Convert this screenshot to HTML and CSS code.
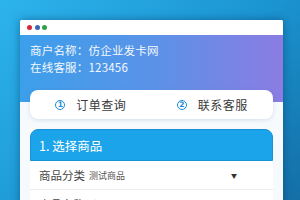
FILE: index.html
```html
<!DOCTYPE html>
<html lang="zh">
<head>
<meta charset="utf-8">
<link rel="stylesheet" href="styles.css">
</head>
<body>
<div class="win">
  <div class="titlebar">
    <span class="dot red"></span><span class="dot blue"></span><span class="dot green"></span>
  </div>
  <div class="hero">
    <div class="line">商户名称：仿企业发卡网</div>
    <div class="line">在线客服：123456</div>
  </div>
  <div class="card">
    <div class="half"><span class="num">1</span><span class="lbl">订单查询</span></div>
    <div class="half"><span class="num">2</span><span class="lbl">联系客服</span></div>
  </div>
  <div class="section">
    <div class="shead">1. 选择商品</div>
    <div class="row"><span class="k">商品分类</span><span class="v">测试商品</span><span class="arrow">▼</span></div>
    <div class="row"><span class="k">商品名称</span><span class="v">请选择商品</span><span class="arrow">▼</span></div>
  </div>
</div>
</body>
</html>
```
FILE: styles.css
```css
html, body { margin: 0; padding: 0; }
body {
  width: 300px; height: 200px; overflow: hidden;
  background: linear-gradient(135deg, #2db3ec 0%, #1b95d2 55%, #146fa6 100%);
  font-family: "Noto Sans CJK SC", "Noto Sans", sans-serif;
  padding: 20px 0 0 20px;
  box-sizing: border-box;
}
.win {
  width: 263px; height: 200px;
  background: #f6fafd;
  box-shadow: 0 0 8px rgba(0, 40, 80, 0.45);
  border-radius: 2px 2px 0 0;
}
.titlebar {
  height: 15px; background: #fff;
  display: flex; align-items: center; gap: 2.5px;
  padding-left: 7px;
  border-radius: 2px 2px 0 0;
}
.dot { width: 5px; height: 5px; border-radius: 50%; display: block; }
.red { background: #d8263e; }
.blue { background: #3a66b4; }
.green { background: #2fa045; }
.hero {
  height: 67px; box-sizing: border-box;
  padding: 7px 0 0 10px;
  background: linear-gradient(90deg, #3c9fea 0%, #5a93e8 50%, #8b7ce2 100%);
  color: #f4f8ff;
  font-size: 11.5px; line-height: 17px;
  letter-spacing: 0.2px;
}
.card {
  margin: -12px 10px 0;
  height: 29px;
  background: #fff;
  border-radius: 8px;
  box-shadow: 0 1px 4px rgba(60, 100, 160, 0.18);
  display: flex;
  position: relative;
}
.half {
  flex: 1; display: flex; align-items: center; justify-content: center; gap: 11px;
  font-size: 12px; color: #3a3a3a;
}
.num {
  width: 8px; height: 8px; border: 1.5px solid #1a8cd6; border-radius: 50%;
  color: #1a8cd6; font-size: 7.5px; font-weight: bold; line-height: 8px;
  text-align: center; font-family: "DejaVu Sans", sans-serif;
}
.lbl { letter-spacing: 0.5px; }
.section {
  margin: 10px 10px 0;
  background: #fff;
}
.shead {
  height: 32px; box-sizing: border-box;
  background: #1ca4ea;
  border: 1px solid #1793d4;
  border-radius: 8px 8px 0 0;
  color: #fff; font-size: 12.5px;
  display: flex; align-items: center; padding-left: 8px;
}
.row {
  height: 29px; box-sizing: border-box;
  border-bottom: 1px solid #ececec;
  display: flex; align-items: center; padding-left: 9px;
  color: #444;
}
.k { font-size: 11.5px; }
.v { font-size: 9px; margin-left: 4px; color: #555; }
.arrow { font-size: 6px; margin-left: auto; margin-right: 36px; color: #333; }
```
